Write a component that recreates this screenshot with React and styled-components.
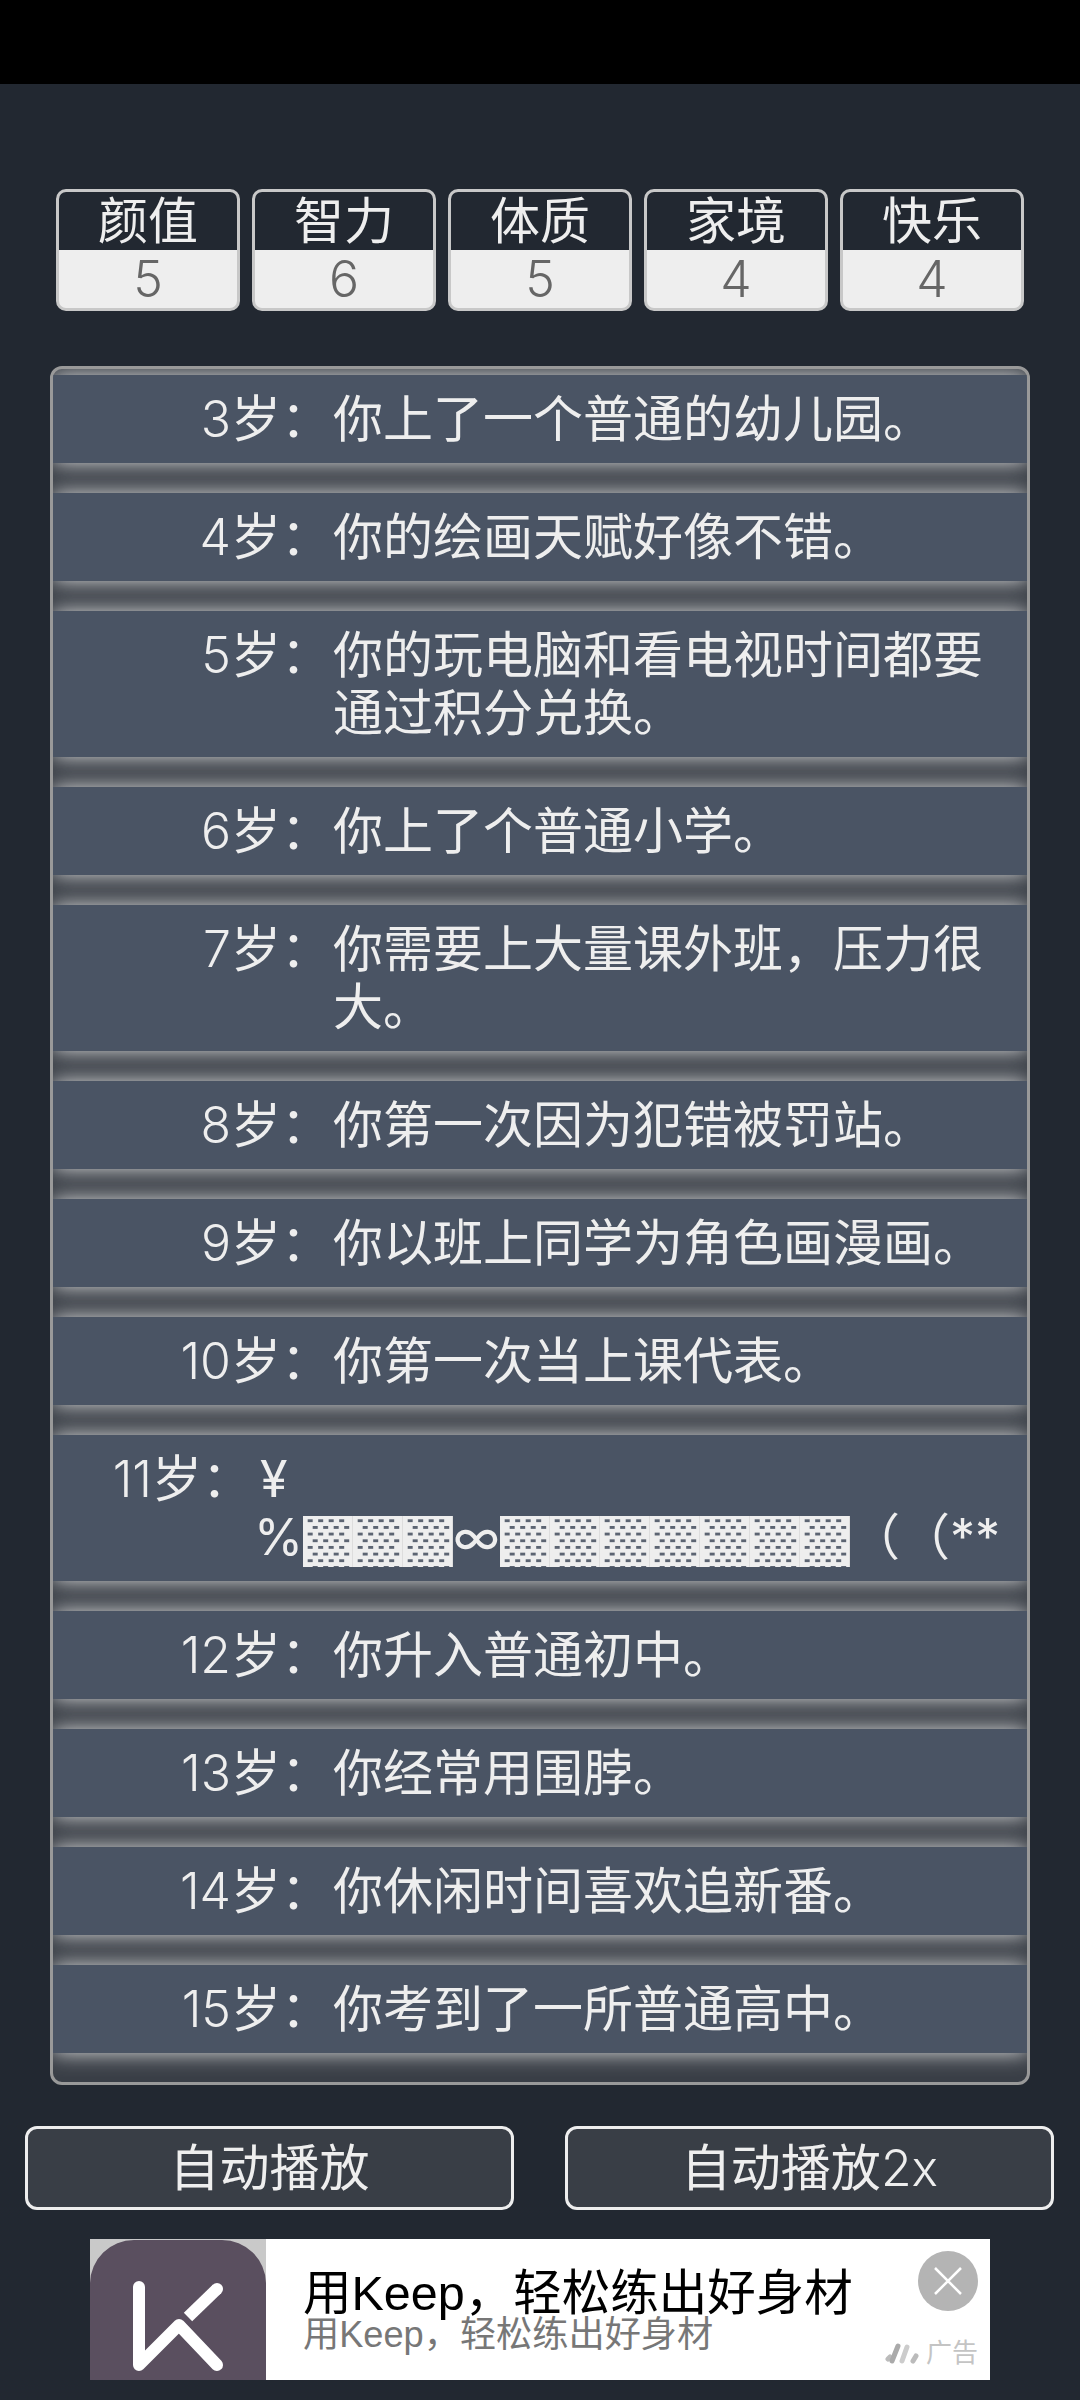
import React from "react";
import styled, { createGlobalStyle } from "styled-components";

const GlobalStyle = createGlobalStyle`
  html, body {
    margin: 0;
    padding: 0;
    background: #222831;
  }
  * {
    box-sizing: border-box;
  }
`;

const FONT = `Inter, "Noto Sans CJK SC", sans-serif`;

// dots of the shade glyph, 4 per row, rows shifted by 5px
const shadeDots = [0, 1, 2, 3]
  .flatMap((i) => [
    `conic-gradient(from 270deg at 5px 3px, #5c6472 25%, transparent 0) ${4.7 + i * 10.5}px 3.3px / 50px 13.33px`,
    `conic-gradient(from 270deg at 5px 3px, #5c6472 25%, transparent 0) ${9.7 + i * 10.5}px 10px / 50px 13.33px`,
  ])
  .join(", ");

const stats = [
  { name: "颜值", value: 5 },
  { name: "智力", value: 6 },
  { name: "体质", value: 5 },
  { name: "家境", value: 4 },
  { name: "快乐", value: 4 },
];

const events = [
  { age: 3, text: "你上了一个普通的幼儿园。" },
  { age: 4, text: "你的绘画天赋好像不错。" },
  { age: 5, text: "你的玩电脑和看电视时间都要通过积分兑换。" },
  { age: 6, text: "你上了个普通小学。" },
  { age: 7, text: "你需要上大量课外班，压力很大。" },
  { age: 8, text: "你第一次因为犯错被罚站。" },
  { age: 9, text: "你以班上同学为角色画漫画。" },
  { age: 10, text: "你第一次当上课代表。" },
  { age: 11, glitch: true },
  { age: 12, text: "你升入普通初中。" },
  { age: 13, text: "你经常用围脖。" },
  { age: 14, text: "你休闲时间喜欢追新番。" },
  { age: 15, text: "你考到了一所普通高中。" },
];

const Page = styled.div`
  width: 1080px;
  height: 2400px;
  background: #222831;
  font-family: ${FONT};
  font-weight: 400;
  text-spacing-trim: space-all;
  overflow: hidden;
`;

const TopBar = styled.div`
  height: 84px;
  background: #000;
`;

const Main = styled.div`
  padding: 105px 50px 0;
`;

const StatRow = styled.div`
  display: flex;
  gap: 12px;
  padding: 0 6px;
`;

const StatBox = styled.div`
  width: 184px;
  height: 122px;
  border: 3px solid #c8c8c8;
  border-radius: 10px;
  overflow: hidden;
  text-align: center;
  font-size: 50px;
  line-height: 58px;
  background: #eeeeee;
`;

const StatName = styled.div`
  height: 58px;
  background: #222831;
  color: #eeeeee;
`;

const StatValue = styled.div`
  color: #666666;
  font-weight: 300;
`;

const Panel = styled.div`
  margin-top: 55px;
  height: 1719px;
  padding-top: 6px;
  border: 3px solid #999999;
  border-radius: 12px;
  background: #393e46;
  overflow: hidden;
`;

const Row = styled.div`
  display: flex;
  gap: 2px;
  margin-bottom: 30px;
  padding: 15px 30px 15px 0;
  background: #4a5464;
  color: #eeeeee;
  font-size: 50px;
  line-height: 58px;
  box-shadow: 0 0 20px rgba(238, 238, 238, 0.9);
`;

const Age = styled.div`
  flex: 0 0 ${(p) => (p.$narrow ? "199px" : "278px")};
  text-align: right;
  white-space: nowrap;
`;

const Digits = styled.span`
  font-weight: 300;
`;

const Text = styled.div`
  flex: 1;
  min-width: 0;
`;

const GlitchLine = styled.div`
  height: 58px;
  white-space: nowrap;
  padding-left: ${(p) => (p.$indent ? "6px" : "0")};
`;

const Shade = styled.span`
  display: inline-block;
  width: 50px;
  height: 51px;
  line-height: 51px;
  vertical-align: -4px;
  color: transparent;
  background: ${shadeDots}, #eeeeee;
  border-right: 1px solid #dddddd;
`;

const ButtonRow = styled.div`
  display: flex;
  justify-content: space-between;
  margin: 41px 26px 0 25px;
`;

const PlayButton = styled.button`
  width: 489px;
  height: 84px;
  padding: 0;
  border: 3px solid #eeeeee;
  border-radius: 12px;
  background: #393e46;
  color: #eeeeee;
  font-family: ${FONT};
  font-weight: 400;
  font-size: 50px;
  line-height: 78px;
`;

const Ad = styled.div`
  position: relative;
  display: flex;
  width: 900px;
  height: 141px;
  margin: 29px 0 0 90px;
  background: #fff;
  font-family: "Liberation Sans", "Noto Sans CJK SC", sans-serif;
  font-weight: 400;
`;

const AdIcon = styled.svg`
  display: block;
  width: 176px;
  height: 141px;
  flex: none;
`;

const AdCopy = styled.div`
  padding: 32px 0 0 37px;
`;

const AdTitle = styled.div`
  font-size: 48.5px;
  line-height: 44px;
  color: #000;
`;

const AdSub = styled.div`
  font-size: 36.2px;
  line-height: 40px;
  color: #777777;
`;

const CloseBadge = styled.div`
  position: absolute;
  top: 12px;
  right: 12px;
  width: 60px;
  height: 60px;
  border-radius: 50%;
  background: #b4b4b4;
  display: flex;
  align-items: center;
  justify-content: center;
`;

const AdMark = styled.div`
  position: absolute;
  right: 12px;
  bottom: 12px;
  display: flex;
  align-items: center;
  gap: 7px;
  font-size: 26px;
  line-height: 30px;
  color: #c4c4c4;
`;

function KeepIcon() {
  return (
    <AdIcon viewBox="0 0 176 141">
      <rect width="176" height="141" fill="#c9c9c9" />
      <path d="M0 141V44A44 44 0 0 1 44 1H132A44 44 0 0 1 176 44V141Z" fill="#5a4f5f" />
      <path
        d="M49 48V126L89 86L127 126"
        fill="none"
        stroke="#fff"
        strokeWidth="12"
        strokeLinecap="round"
        strokeLinejoin="round"
      />
      <path d="M98 78L127 50" fill="none" stroke="#fff" strokeWidth="12" />
      <path d="M127 50L127 50" fill="none" stroke="#fff" strokeWidth="12" strokeLinecap="round" />
    </AdIcon>
  );
}

function AdLogo() {
  return (
    <svg width="34" height="22" viewBox="0 0 34 22" fill="none" strokeWidth="5" strokeLinecap="round">
      <path d="M3 17L5 15" stroke="#bbbbbb" />
      <path d="M7 19L13 4" stroke="#aaaaaa" />
      <path d="M17 19L22 5" stroke="#cccccc" />
      <path d="M28 19L31 14" stroke="#bbbbbb" />
    </svg>
  );
}

function shades(n) {
  return Array.from({ length: n }, (_, i) => <Shade key={i}>▓</Shade>);
}

export default function App() {
  return (
    <Page>
      <GlobalStyle />
      <TopBar />
      <Main>
        <StatRow>
          {stats.map((s) => (
            <StatBox key={s.name}>
              <StatName>{s.name}</StatName>
              <StatValue>{s.value}</StatValue>
            </StatBox>
          ))}
        </StatRow>
        <Panel>
          {events.map((e) => (
            <Row key={e.age}>
              <Age $narrow={e.glitch}>
                <Digits>{e.age}</Digits>岁：
              </Age>
              {e.glitch ? (
                <Text>
                  <GlitchLine $indent>¥</GlitchLine>
                  <GlitchLine>
                    %{shades(3)}∞{shades(7)}（（**
                  </GlitchLine>
                </Text>
              ) : (
                <Text>{e.text}</Text>
              )}
            </Row>
          ))}
        </Panel>
      </Main>
      <ButtonRow>
        <PlayButton>自动播放</PlayButton>
        <PlayButton>
          自动播放<Digits>2x</Digits>
        </PlayButton>
      </ButtonRow>
      <Ad>
        <KeepIcon />
        <AdCopy>
          <AdTitle>用Keep，轻松练出好身材</AdTitle>
          <AdSub>用Keep，轻松练出好身材</AdSub>
        </AdCopy>
        <CloseBadge>
          <svg width="30" height="30" viewBox="0 0 30 30">
            <path d="M2 2L28 28M28 2L2 28" stroke="#fff" strokeWidth="2.5" />
          </svg>
        </CloseBadge>
        <AdMark>
          <AdLogo />
          广告
        </AdMark>
      </Ad>
    </Page>
  );
}
